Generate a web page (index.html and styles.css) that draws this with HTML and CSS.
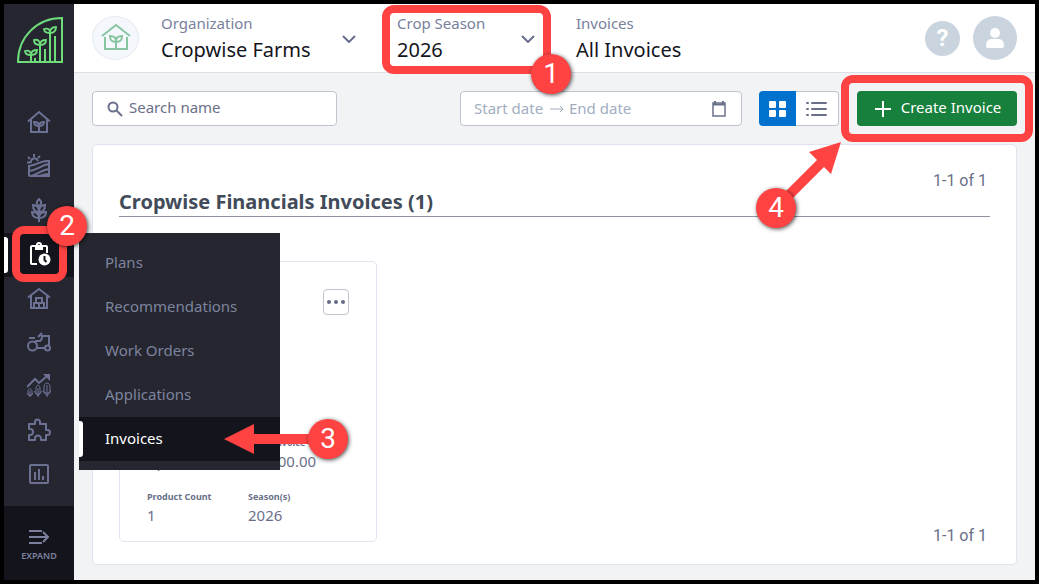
FILE: index.html
```html
<!DOCTYPE html>
<html lang="en">
<head>
  <meta charset="UTF-8">
  <meta name="viewport" content="width=device-width, initial-scale=1.0">
  <title>Invoices - Cropwise Financials</title>
  <link rel="stylesheet" href="styles.css">
</head>
<body>
  <aside class="sidebar">
    <a href="#" class="logo" aria-label="Cropwise">
      <svg viewBox="0 0 46 46" width="46" height="46" fill="none" stroke="#6fdc7c" stroke-width="2">
        <path d="M45 1v44H1C1 20 20 1 45 1z"/>
        <path d="M14 45v-9M18 45v-4M23 45V27M28 45V32M33 45V16M38 45V19" stroke-width="2"/>
        <path d="M14 38c-4 0-6-1-6-4 3-1 6 0 6 4 0-4 2-5 6-5 0 3-2 5-6 5zM23 28c-4 0-6-2-6-5 4-1 6 1 6 5 0-4 3-5 6-5 0 3-2 5-6 5zM33 16c-4 0-6-2-6-4 4-1 6 0 6 4 0-4 2-6 6-6 0 4-2 6-6 6z" stroke-width="1.8"/>
      </svg>
    </a>
    <nav class="nav">
      <a href="#" class="nav-link" aria-label="Home">
        <svg class="icon" viewBox="0 0 24 24">
          <path d="M1 11.500L12 2l11 9.500M4 9v13h16V9"/>
          <path d="M12 22v-7M12 16c-4 0-5-2-5-4 3 0 5 1 5 4 0-3 2-4 5-4 0 2-1 4-5 4z"/>
        </svg>
      </a>
      <a href="#" class="nav-link" aria-label="Fields">
        <svg class="icon" viewBox="0 0 24 24">
          <path d="M2 12v9a1 1 0 0 0 1 1h19V7c-8-1-11 4-20 5zM2 17c9-1 12-6 20-7M4 22c6-1 10-6 18-7M12 22c4-1 6-2 10-2"/>
          <path d="M4 9a3.500 3.500 0 0 1 7-2M7 3V0M3 5L1 3M3 8.500H0M11 4l2-2"/>
        </svg>
      </a>
      <a href="#" class="nav-link" aria-label="Crops">
        <svg class="icon" viewBox="0 0 24 24">
          <path d="M12 24V9M12 8c-3-2-3-4 0-7 3 3 3 5 0 7z"/>
          <path d="M12 14c-4 0-6-3-6-7 4 0 6 3 6 7zM12 14c4 0 6-3 6-7-4 0-6 3-6 7zM12 20c-4 0-7-2-7-6 4 0 7 2 7 6zM12 20c4 0 7-2 7-6-4 0-7 2-7 6z"/>
        </svg>
      </a>
      <div class="nav-group">
        <a href="#" class="nav-link active" aria-label="Planning">
          <svg class="icon" viewBox="0 0 24 24">
            <path d="M10 22H5a1 1 0 0 1-1-1V5a1 1 0 0 1 1-1h14a1 1 0 0 1 1 1v6"/>
            <path d="M8 4h8v4H8z" fill="currentColor" stroke="none"/>
            <circle cx="12" cy="3" r="2"/>
            <circle cx="17.500" cy="17.500" r="6" fill="currentColor" stroke="none"/>
            <path class="clock-hand" d="M17.500 14v4l2 2"/>
          </svg>
        </a>
        <ul class="submenu">
          <li><a href="#">Plans</a></li>
          <li><a href="#">Recommendations</a></li>
          <li><a href="#">Work Orders</a></li>
          <li><a href="#">Applications</a></li>
          <li class="current">
            <a href="#">Invoices</a>
            <div class="step step-3">
              <svg viewBox="0 0 90 30" width="90" height="30"><path d="M0 15L30 0v10h60v10H30v10z"/></svg>
              <span class="badge">3</span>
            </div>
          </li>
        </ul>
        <div class="highlight highlight-nav"><span class="badge">2</span></div>
      </div>
      <a href="#" class="nav-link" aria-label="Storage">
        <svg class="icon" viewBox="0 0 24 24">
          <path d="M1 11.500L12 3l11 8.500M4 9.500V22h16V9.500"/>
          <path d="M9 12h6v5H9zM7 17h5v5H7zM12 17h5v5h-5z"/>
        </svg>
      </a>
      <a href="#" class="nav-link" aria-label="Equipment">
        <svg class="icon" viewBox="0 0 24 24">
          <circle cx="5.500" cy="16" r="4.500"/>
          <circle cx="20.500" cy="18" r="2.500"/>
          <path d="M2 8h6M8 11h4c2 0 3-1 3-5h7v9M10 18h8M11 7l4-4"/>
        </svg>
      </a>
      <a href="#" class="nav-link" aria-label="Performance">
        <svg class="icon" viewBox="0 0 24 24">
          <path d="M0 13l8-8 4 4 8-7"/>
          <path d="M16 0h7v7z" fill="currentColor" stroke="none"/>
          <path class="thin" d="M3 23v-6M1 17c1-3 3-3 4 0v4H1zM0 19l3 3 3-3M11 23v-9M9 14c1-4 3-4 4 0v6H9zM7 17l4 5 4-5M20 23V11M17 12c1-4 5-4 6 0v7h-6zM16 16l4 6 4-6"/>
        </svg>
      </a>
      <a href="#" class="nav-link" aria-label="Integrations">
        <svg class="icon" viewBox="0 0 24 24">
          <path d="M2 6h6V4a2.500 2.500 0 0 1 5 0v2h6v6h1.500a2.500 2.500 0 0 1 0 5H19v5h-5v-1.500a3 3 0 0 0-6 0V22H2v-5h1a3 3 0 0 0 0-6H2z" stroke-linejoin="round"/>
        </svg>
      </a>
      <a href="#" class="nav-link" aria-label="Reports">
        <svg class="icon" viewBox="0 0 24 24">
          <rect x="3" y="3" width="18" height="18" rx="1"/>
          <path d="M8 10v8M12 7v11M16 14v4"/>
        </svg>
      </a>
    </nav>
    <button type="button" class="expand">
      <svg class="icon" viewBox="0 0 24 24"><path d="M2 6h13M2 12h19M2 18h13M16 7l5 5-5 5"/></svg>
      EXPAND
    </button>
  </aside>

  <div class="page">
    <header class="header">
      <div class="org-avatar">
        <svg class="icon" viewBox="0 0 30 30">
          <path d="M1 13L15 2l14 11M4 14v12h22V14"/>
          <path d="M15 26V16M15 19c-5 0-6-2-6-6 4 0 6 2 6 5 0-3 2-5 6-5 0 4-1 6-6 6z"/>
        </svg>
      </div>
      <div class="field field-org">
        <label for="organization">Organization</label>
        <select id="organization">
          <option>Cropwise Farms</option>
        </select>
        <svg class="chevron" viewBox="0 0 14 8"><path d="M1 1l6 6 6-6"/></svg>
      </div>
      <div class="field field-season">
        <label for="season">Crop Season</label>
        <select id="season">
          <option>2026</option>
        </select>
        <svg class="chevron" viewBox="0 0 14 8"><path d="M1 1l6 6 6-6"/></svg>
        <div class="highlight highlight-season"><span class="badge">1</span></div>
      </div>
      <div class="field">
        <span class="field-label">Invoices</span>
        <h1>All Invoices</h1>
      </div>
      <div class="header-actions">
        <button type="button" class="help" aria-label="Help">?</button>
        <button type="button" class="user" aria-label="Account">
          <svg viewBox="0 0 20 22" width="20" height="22" fill="#fff">
            <circle cx="10" cy="6" r="5"/>
            <path d="M1 19c0-4 2-7 5-7h8c3 0 5 3 5 7 0 1-1 2-2 2H3c-1 0-2-1-2-2z"/>
          </svg>
        </button>
      </div>
    </header>

    <main class="main">
      <div class="toolbar">
        <div class="box search">
          <svg class="icon" viewBox="0 0 16 16"><circle cx="6" cy="6" r="4.500"/><path d="M9.500 9.500L15 15"/></svg>
          <input type="text" placeholder="Search name" aria-label="Search name">
        </div>
        <div class="box dates">
          <input type="text" class="start" placeholder="Start date" aria-label="Start date">
          <svg class="date-arrow" viewBox="0 0 16 10"><path d="M1 5h13M11 2l3 3-3 3"/></svg>
          <input type="text" class="end" placeholder="End date" aria-label="End date">
          <svg class="icon" viewBox="0 0 16 18">
            <path d="M2 3h12v13H2z" stroke-width="1.5"/>
            <path d="M2 4.500h12M4 1v3M12 1v3"/>
          </svg>
        </div>
        <div class="view-toggle">
          <button type="button" class="grid-view" aria-label="Grid view">
            <svg viewBox="0 0 18 18" width="18" height="18" fill="#fff">
              <rect x="0" y="1" width="7" height="7" rx="1"/><rect x="10" y="1" width="7" height="7" rx="1"/>
              <rect x="0" y="10" width="7" height="7" rx="1"/><rect x="10" y="10" width="7" height="7" rx="1"/>
            </svg>
          </button>
          <button type="button" class="list-view" aria-label="List view">
            <svg class="icon" viewBox="0 0 22 18"><path d="M1 3h1M1 9h1M1 15h1M6 3h14M6 9h14M6 15h14" stroke-linecap="round"/></svg>
          </button>
        </div>
        <div class="create-wrap">
          <button type="button" class="create">
            <svg viewBox="0 0 16 16" width="16" height="16" stroke="#fff" stroke-width="2"><path d="M8 0v16M0 8h16"/></svg>
            <span>Create Invoice</span>
          </button>
          <div class="highlight highlight-create"></div>
          <div class="step step-4">
            <svg viewBox="0 0 86 86" width="86" height="86"><path d="M85 0L53 10l8 8-46 46 7 7 46-46 7 7z"/></svg>
            <span class="badge">4</span>
          </div>
        </div>
      </div>

      <section class="panel">
        <p class="pager">1-1 of 1</p>
        <h2>Cropwise Financials Invoices (1)</h2>
        <div class="results">
          <article class="card">
            <button type="button" class="more" aria-label="More actions">
              <svg viewBox="0 0 18 4" width="18" height="4" fill="#656a88"><circle cx="2" cy="2" r="2"/><circle cx="9" cy="2" r="2"/><circle cx="16" cy="2" r="2"/></svg>
            </button>
            <dl class="facts">
              <div><dt></dt><dd>Apr 2026</dd></div>
              <div><dt>Total Invoice Cost</dt><dd>$1,000.00</dd></div>
              <div><dt>Product Count</dt><dd>1</dd></div>
              <div><dt>Season(s)</dt><dd>2026</dd></div>
            </dl>
          </article>
          <p class="pager">1-1 of 1</p>
        </div>
      </section>
    </main>
  </div>
</body>
</html>
```
FILE: styles.css
```css
* {
  box-sizing: border-box;
}
body {
  display: flex;
  min-height: 100vh;
  margin: 0;
  border: 4px solid #000;
  background: #f2f3f5;
  color: #697089;
  font-family: "Noto Sans", sans-serif;
  font-size: 15px;
  line-height: 20px;
}
h1, h2, p, ul, dl, dd {
  margin: 0;
  padding: 0;
}
a {
  color: inherit;
  text-decoration: none;
}
button, input, select {
  padding: 0;
  border: none;
  background: none;
  color: inherit;
  font: inherit;
}
button, select {
  cursor: pointer;
}
svg {
  display: block;
  flex: none;
}
.icon {
  width: 24px;
  height: 24px;
  fill: none;
  stroke: currentColor;
  stroke-width: 2;
}

/* Sidebar */
.sidebar {
  position: relative;
  z-index: 2;
  display: flex;
  flex-direction: column;
  flex: none;
  width: 70px;
  background: #252630;
  color: #6c7194;
}
.logo {
  padding: 13px 0 0 13px;
}
.nav {
  margin-top: 38px;
}
.nav-link {
  display: flex;
  align-items: center;
  justify-content: center;
  height: 44px;
  padding-bottom: 2px;
}
.nav-link .thin {
  stroke-width: 1;
}
.nav-group {
  position: relative;
}
.nav-link.active {
  background: #14151c;
  color: #fff;
}
.clock-hand {
  stroke: #14151c;
}
.nav-link.active::before,
.current::before {
  content: "";
  position: absolute;
  top: 4px;
  left: 0;
  width: 4px;
  height: 36px;
  border-radius: 0 3px 3px 0;
  background: #fff;
}
.submenu {
  position: absolute;
  top: 0;
  left: 75px;
  width: 201px;
  padding: 8px 0 9px;
  background: #252630;
  color: #7e849e;
  list-style: none;
}
.submenu a {
  display: block;
  padding: 0 26px 2px;
  line-height: 42px;
}
.submenu .current {
  position: relative;
  background: #14151c;
  color: #fff;
}
.expand {
  display: flex;
  flex-direction: column;
  align-items: center;
  height: 74px;
  margin-top: auto;
  padding-top: 19px;
  background: #14151c;
  color: #7b819d;
  font-size: 9px;
  font-weight: 600;
  line-height: 14px;
}

/* Header */
.page {
  flex: 1;
  display: flex;
  flex-direction: column;
  min-width: 0;
}
.header {
  display: flex;
  align-items: center;
  height: 69px;
  padding: 0 18px;
  border-bottom: 1px solid #dcdfe5;
  background: #fff;
}
.org-avatar {
  display: grid;
  place-items: center;
  width: 47px;
  height: 44px;
  margin-right: 22px;
  border: 1px solid #e6e9ef;
  border-radius: 50%;
  background: #f4f8fd;
  color: #89c4a1;
}
.org-avatar .icon {
  width: 30px;
  height: 30px;
}
.field {
  position: relative;
  display: grid;
  grid-template-columns: 1fr auto;
  align-items: center;
  margin: 2px 41px 0 0;
}
.field-org {
  width: 195px;
}
.field-season {
  width: 138px;
}
.field label,
.field-label {
  grid-column: 1;
  color: #78809b;
  line-height: 22px;
}
.field select,
.field h1 {
  grid-column: 1;
  height: 32px;
  color: #14151c;
  font-size: 20px;
  font-weight: 400;
  line-height: 32px;
}
.field select {
  appearance: none;
}
.chevron {
  grid-column: 2;
  grid-row: 1 / 3;
  width: 14px;
  height: 8px;
  fill: none;
  stroke: #696e90;
  stroke-width: 2;
}
.header-actions {
  display: flex;
  align-items: center;
  gap: 13px;
  margin-left: auto;
}
.help,
.user {
  display: grid;
  place-items: center;
  width: 35px;
  height: 35px;
  border-radius: 50%;
  background: #cad4df;
  color: #fff;
  font-family: Roboto, sans-serif;
  font-size: 24px;
  font-weight: 700;
}
.user {
  width: 44px;
  height: 44px;
}

/* Toolbar */
.main {
  flex: 1;
  display: flex;
  flex-direction: column;
  gap: 18px;
  padding: 18px 18px 15px;
}
.toolbar {
  display: flex;
  height: 35px;
}
.box {
  display: flex;
  align-items: center;
  padding: 0 14px;
  border: 1px solid #bfc4ce;
  border-radius: 4px;
  background: #fff;
}
.box input {
  min-width: 0;
  padding-bottom: 2px;
  outline: none;
}
.box .icon {
  width: 16px;
  height: 18px;
}
.search {
  width: 245px;
  gap: 6px;
}
.search input {
  flex: 1;
  padding-bottom: 3px;
}
.search input::placeholder {
  color: #697089;
}
.dates {
  width: 282px;
  margin-left: auto;
  padding: 0 13px;
}
.dates input::placeholder {
  color: #a1aebf;
}
.dates .start {
  width: 75px;
}
.dates .end {
  flex: 1;
}
.date-arrow {
  width: 16px;
  height: 10px;
  margin-right: 4px;
  fill: none;
  stroke: #a1aebf;
}
.dates .icon {
  margin-right: 1px;
}
.view-toggle {
  display: flex;
  width: 80px;
  margin: 0 18px 0 17px;
}
.view-toggle button {
  display: grid;
  place-items: center;
}
.grid-view {
  width: 37px;
  border-radius: 4px 0 0 4px;
  background: #0071cd;
}
.view-toggle .list-view {
  flex: 1;
  border: 1px solid #bfc4ce;
  border-left: none;
  border-radius: 0 4px 4px 0;
  background: #fff;
}
.list-view .icon {
  width: 22px;
  height: 18px;
}
.create-wrap {
  position: relative;
  display: flex;
}
.create {
  display: flex;
  align-items: center;
  justify-content: center;
  gap: 10px;
  width: 160px;
  padding-left: 2px;
  border-radius: 4px;
  background: #17803d;
  color: #fff;
}
.create span {
  padding-bottom: 3px;
}

/* Invoice list */
.panel {
  flex: 1;
  display: flex;
  flex-direction: column;
  padding: 26px 26px 18px;
  border: 1px solid #dfe4ee;
  border-radius: 5px;
  background: #fff;
}
.pager {
  margin-right: 3px;
  font-family: Roboto, sans-serif;
  font-size: 16px;
  text-align: right;
}
.panel h2 {
  padding-bottom: 3px;
  border-bottom: 1px solid #8f929e;
  color: #424b59;
  font-size: 20px;
  font-weight: 700;
  line-height: 22px;
}
.results {
  flex: 1;
  display: flex;
  align-items: flex-end;
  justify-content: space-between;
  padding-top: 44px;
}
.card {
  display: flex;
  flex-direction: column;
  justify-content: space-between;
  align-self: stretch;
  width: 258px;
  margin-bottom: 4px;
  padding: 27px 27px 15px;
  border: 1px solid #dfe4ee;
  border-radius: 5px;
}
.more {
  display: grid;
  place-items: center;
  align-self: flex-end;
  width: 26px;
  height: 26px;
  border: 1px solid #bfc4ce;
  border-radius: 4px;
}
.facts {
  display: grid;
  grid-template-columns: 101px 1fr;
  row-gap: 18px;
}
.facts dt {
  height: 14px;
  font-size: 9px;
  font-weight: 700;
  line-height: 14px;
}
.facts dd {
  font-size: 15px;
  line-height: 22px;
}

/* Tutorial steps */
.highlight {
  position: absolute;
  border: 8px solid #ff4242;
  border-radius: 12px;
  pointer-events: none;
}
.badge {
  display: grid;
  place-items: center;
  width: 40px;
  height: 40px;
  border-radius: 50%;
  background: #ff4242;
  box-shadow: 1px 1px 4px rgba(0, 0, 0, 0.7);
  color: #fff;
  font-family: Roboto, sans-serif;
  font-size: 28px;
}
.highlight .badge {
  position: absolute;
  right: -28px;
}
.highlight-season {
  inset: -7px -16px -8px -15px;
}
.highlight-season .badge {
  bottom: -28px;
}
.highlight-nav {
  inset: -7px 7px -5px 8px;
}
.highlight-nav .badge {
  top: -28px;
}
.highlight-create {
  inset: -16px;
}
.step {
  position: absolute;
  pointer-events: none;
}
.step svg {
  fill: #ff4242;
}
.step-3 {
  top: 2px;
  left: 145px;
  display: flex;
  align-items: center;
}
.step-3 .badge {
  margin-left: -6px;
}
.step-4 {
  top: 51px;
  left: -101px;
}
.step-4 .badge {
  position: absolute;
  bottom: 0;
  left: 0;
}
```
